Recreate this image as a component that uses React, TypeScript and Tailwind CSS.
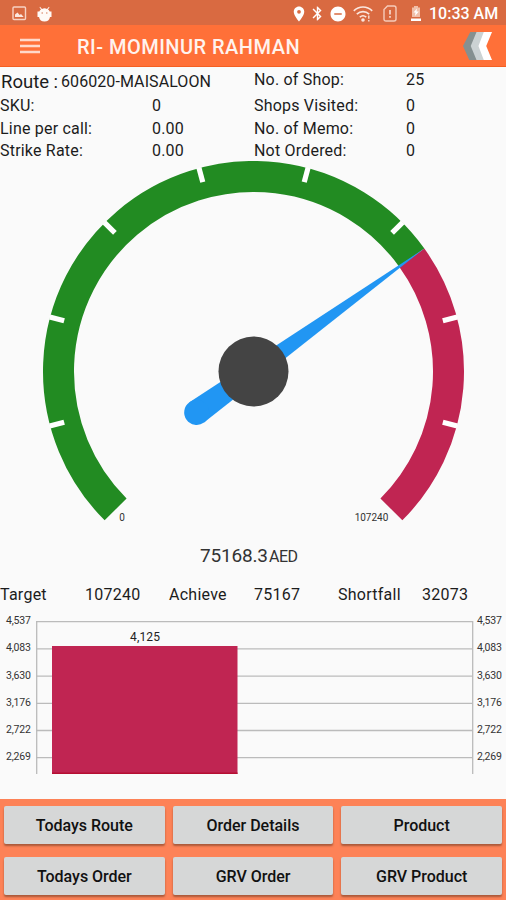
import { MdBluetooth, MdDoNotDisturbOn, MdLocationOn } from 'react-icons/md'

const leftStats = [
  { label: 'SKU:', value: '0' },
  { label: 'Line per call:', value: '0.00' },
  { label: 'Strike Rate:', value: '0.00' },
]

const rightStats = [
  { label: 'Shops Visited:', value: '0' },
  { label: 'No. of Memo:', value: '0' },
  { label: 'Not Ordered:', value: '0' },
]

const axisLabels = ['4,537', '4,083', '3,630', '3,176', '2,722', '2,269']

const buttons = ['Todays Route', 'Order Details', 'Product', 'Todays Order', 'GRV Order', 'GRV Product']

const TARGET = 107240
const ACHIEVED = 75168.3
const CX = 253.5
const CY = 210.5

function point(deg: number, r: number) {
  const a = (deg * Math.PI) / 180
  return [CX + r * Math.cos(a), CY + r * Math.sin(a)]
}

function arc(from: number, to: number, r: number) {
  const [x1, y1] = point(from, r)
  const [x2, y2] = point(to, r)
  return `M${x1} ${y1}A${r} ${r} 0 ${to - from > 180 ? 1 : 0} 1 ${x2} ${y2}`
}

function StatusBar() {
  return (
    <div className="flex h-[25px] items-center bg-[#d96a41] pl-3 pr-[7px] pt-0.5 text-white">
      <svg width="15" height="15" viewBox="0 0 15 15" fill="none">
        <rect x="1" y="1" width="12.5" height="12.5" rx="1" stroke="#f8d2c3" strokeWidth="1.4" />
        <path d="M3 11V8.5l2.5-2 2.2 2.6 1.3-1 2.7 2.9z" fill="#fbe7df" />
      </svg>
      <svg width="15" height="16" viewBox="0 0 15 16" className="ml-[10px]">
        <path
          d="M3 .8l2 2.1a6 6 0 015 0l2-2.1.5.5-1.5 2.3A5 5 0 0112.7 5.500H14.500v5.500h-1.500a5.600 5.600 0 01-11 0H.5V5.500h1.800A5 5 0 014 3.600L2.500 1.300z"
          fill="#fffaf7"
        />
        <circle cx="5.200" cy="7" r=".8" fill="#d98a6c" />
        <circle cx="9.800" cy="7" r=".8" fill="#d98a6c" />
      </svg>
      <div className="ml-auto flex items-center">
        <MdLocationOn size={18} />
        <MdBluetooth size={17} className="ml-px" />
        <MdDoNotDisturbOn size={18} className="ml-[3px]" />
        <svg width="20" height="18" viewBox="0 0 20 18" fill="none" stroke="#fbe7df" strokeWidth="1.600" className="ml-[6px]">
          <path d="M.8 5.800C6 .8 14 .8 19.200 5.800" />
          <path d="M3.800 9.200C7.400 5.800 12.600 5.800 16.200 9.200" />
          <path d="M6.800 12.200C8.800 10.400 11.200 10.400 13.200 12.200" />
          <circle cx="10" cy="15" r="1" fill="#fff" />
          <path d="M15.800 10.500v3.200M15.800 15v1.500" strokeWidth="1.300" />
        </svg>
        <svg width="14" height="17" viewBox="0 0 14 17" fill="none" stroke="#f6cbb9" strokeWidth="1.400" className="ml-[10px]">
          <path d="M4.500 1h6.500q2 0 2 2v11q0 2-2 2H3q-2 0-2-2V4.500z" />
          <path d="M7 5v4.500M7 11v1.800" stroke="#fdeee8" />
        </svg>
        <svg width="12" height="17" viewBox="0 0 12 17" className="ml-[13px]">
          <path d="M4 1h4v1.500h2V12H2V2.500h2z" fill="#f1bfa9" />
          <path d="M7 3.500L3.500 7.500h2L5 11l3.800-4.500H6.500z" fill="#fff" />
          <path d="M1 13.500h10V16H1z" fill="#fff" />
        </svg>
        <span className="ml-[7px] w-[70px] whitespace-nowrap pt-px text-[16px] font-medium leading-5">10:33 AM</span>
      </div>
    </div>
  )
}

function AppBar() {
  return (
    <header className="flex h-[42px] items-center border-b border-[#f45f22] bg-[#ff7038] pl-5 pr-[13px]">
      <svg width="20" height="16" viewBox="0 0 20 16" stroke="#ffd9ca" strokeWidth="2.300">
        <path d="M0 2h20M0 8h20M0 14h20" />
      </svg>
      <h1 className="ml-[37px] pt-0.5 text-[20px] font-medium leading-6 tracking-[0.480px] text-[#fff3ee]">
        RI- MOMINUR RAHMAN
      </h1>
      <svg width="31" height="30" viewBox="0 0 32 31" className="ml-auto">
        <path d="M8.500 1h8L10 15.500 15.500 30H7.500L1 15.500z" fill="#859090" />
        <path d="M15 1h9.500l-6 14.500L24 30h-9L9 15.500z" fill="#cbd2d3" />
        <path d="M22.500 1H31l-6 14.500L31 30h-8.500l-5.500-14.500z" fill="#fff" />
      </svg>
    </header>
  )
}

function Stats() {
  return (
    <section className="grid h-[94px] grid-cols-2 text-[16px] leading-[22.500px] tracking-[0.200px]">
      <div>
        <div className="flex h-7 items-center whitespace-pre pl-px pt-0.5">
          <span className="w-[60px] text-[18.500px] tracking-normal">Route :</span>
          <span className="tracking-[0.080px]">606020-MAISALOON</span>
        </div>
        {leftStats.map((s) => (
          <div key={s.label} className="flex">
            <span className="w-[152px]">{s.label}</span>
            <span>{s.value}</span>
          </div>
        ))}
      </div>
      <div className="pl-px">
        <div className="flex h-7 items-center pb-px">
          <span className="w-[152px]">No. of Shop:</span>
          <span>25</span>
        </div>
        {rightStats.map((s) => (
          <div key={s.label} className="flex">
            <span className="w-[152px]">{s.label}</span>
            <span>{s.value}</span>
          </div>
        ))}
      </div>
    </section>
  )
}

function Gauge() {
  const needle = 135 + (ACHIEVED / TARGET) * 270
  return (
    <svg width="506" height="422" viewBox="0 0 506 422" className="block">
      <path d={arc(135, needle, 195)} fill="none" stroke="#228b22" strokeWidth="31" />
      <path d={arc(needle, 405, 195)} fill="none" stroke="#c02552" strokeWidth="31" />
      {[165, 195, 225, 255, 285, 315, 345, 375].map((deg) => {
        const [x1, y1] = point(deg, 211)
        const [x2, y2] = point(deg, 196)
        return <line key={deg} x1={x1} y1={y1} x2={x2} y2={y2} stroke="#fff" strokeWidth="5.200" />
      })}
      <g transform={`translate(${CX} ${CY}) rotate(${needle})`} fill="#2196f3">
        <path d="M-70-12.500L210 0-70 12.500z" />
        <circle cx="-70" cy="0" r="12.500" />
      </g>
      <circle cx={CX} cy={CY} r="35" fill="#444" />
      <g fill="#333" fontSize="10" textAnchor="middle">
        <text x="122" y="360">0</text>
        <text x="371.500" y="360">{TARGET}</text>
      </g>
      <text x="200" y="401" fontSize="19" fill="#333" textLength="68">{ACHIEVED}</text>
      <text x="269" y="401" fontSize="16" fill="#333" textLength="29">AED</text>
    </svg>
  )
}

function Summary() {
  return (
    <div className="grid h-6 grid-cols-[85px_84px_85px_84px_84px_84px] text-[16px] leading-6 tracking-[0.250px]">
      <span>Target</span>
      <span>107240</span>
      <span>Achieve</span>
      <span>75167</span>
      <span>Shortfall</span>
      <span>32073</span>
    </div>
  )
}

function AxisLabels() {
  return (
    <div className="-mt-3.5 text-[10.500px] leading-[27.250px] tracking-[-0.200px] text-[#333]">
      {axisLabels.map((l) => (
        <div key={l}>{l}</div>
      ))}
    </div>
  )
}

function SalesChart() {
  return (
    <div className="mt-[14px] flex h-[153px]">
      <div className="w-9 pl-1.5">
        <AxisLabels />
      </div>
      <svg width="438" height="153" viewBox="0 0 438 153">
        <g stroke="#bbb" strokeWidth="1.300">
          {axisLabels.map((l, i) => (
            <line key={l} x1="0" x2="437" y1={0.700 + i * 27.200} y2={0.700 + i * 27.200} />
          ))}
          <path d="M.7 0v153M436.700 0v153" />
        </g>
        <rect x="16" y="25" width="185.500" height="128" fill="#c02552" />
        <path d="M16 152.300h185.500" stroke="#b50f32" strokeWidth="1.400" />
        <text x="109" y="19.500" fontSize="12" fill="#222" textAnchor="middle" textLength="30">4,125</text>
      </svg>
      <div className="pl-[3px]">
        <AxisLabels />
      </div>
    </div>
  )
}

function ButtonBar() {
  return (
    <nav className="mt-auto grid h-[101px] grid-cols-3 grid-rows-[38px_38px] gap-x-2 gap-y-[13px] bg-[#fd8257] px-1 pt-[7px]">
      {buttons.map((b) => (
        <button
          key={b}
          className="rounded-[2px] bg-[#d6d7d7] pt-0.5 text-[16px] font-medium tracking-[-0.020px] text-[#111] shadow-[0_2px_2px_rgba(90,50,30,0.5)]"
        >
          {b}
        </button>
      ))}
    </nav>
  )
}

export default function App() {
  return (
    <div className="flex h-[900px] w-[506px] flex-col overflow-hidden bg-[#fafafa] font-['Roboto',sans-serif] text-[#1c1c1c]">
      <StatusBar />
      <AppBar />
      <Stats />
      <Gauge />
      <Summary />
      <SalesChart />
      <ButtonBar />
    </div>
  )
}
